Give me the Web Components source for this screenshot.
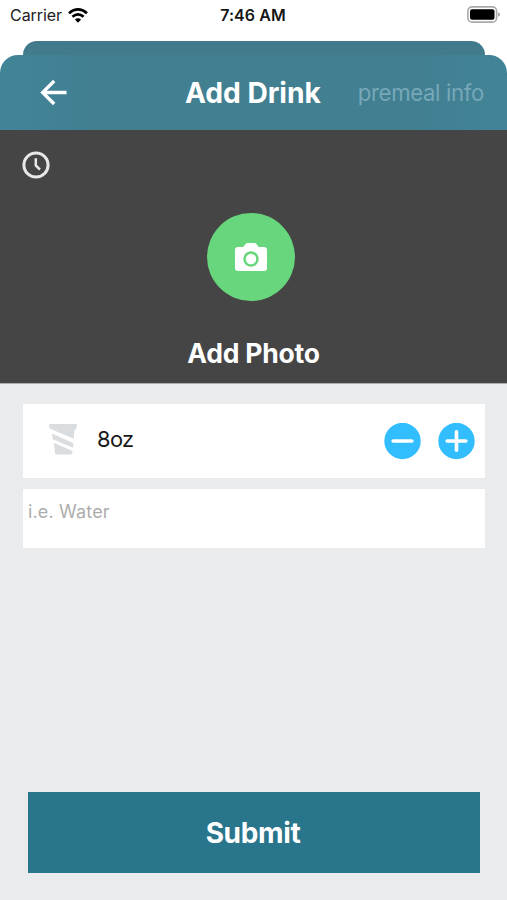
<!DOCTYPE html>
<html lang="en">
<head>
<meta charset="utf-8">
<title>Add Drink</title>
<style>
html,body{margin:0;height:100%;background:#fff}
body{font-family:Inter,"Liberation Sans",sans-serif;overflow:hidden}
</style>
</head>
<body>
<drink-screen></drink-screen>
<script>
const define = (name, markup) => customElements.define(name, class extends HTMLElement {
  constructor() {
    super();
    this.attachShadow({ mode: 'open' }).innerHTML = markup;
  }
});

define('status-bar', `
<style>
:host{display:grid;grid-template-columns:1fr auto 1fr;align-items:center;height:30px;padding:0 8px 0 7px;font-size:16px;line-height:30px;color:#222;box-sizing:border-box}
.left{display:flex;align-items:center;gap:6px;padding-left:3px}
.carrier{letter-spacing:-.05px}
.time{font-weight:600;letter-spacing:.08px;color:#161616}
svg{display:block}
.battery{justify-self:end;margin:-2px -1px 0 0}
</style>
<div class="left"><span class="carrier">Carrier</span>
<svg width="20" height="15" viewBox="0 0 20 15" fill="none" stroke="#000" stroke-width="2.7"><path d="M1 5.2Q10-2.3 19 5.2M4.4 8.8Q10 4 15.6 8.8"/><path d="M6.9 11.5Q10 9 13.1 11.5L10 14.7Z" fill="#000" stroke="none"/></svg></div>
<span class="time">7:46 AM</span>
<svg class="battery" width="33" height="17" viewBox="0 0 33 17"><rect x=".9" y=".9" width="28.7" height="15.2" rx="4.2" fill="#fff" stroke="#aaa" stroke-width="1.6"/><rect x="3" y="3.2" width="24.5" height="10.6" rx="2" fill="#000"/><path d="M31.2 6.2Q33 7 33 8.5T31.2 10.8Z" fill="#999"/></svg>
`);

define('nav-header', `
<style>
:host{display:grid;grid-template-rows:14px 75px;margin-top:11px}
.back-card{grid-row:1/3;grid-column:1;margin:0 22px 0 23px;border-radius:14px 14px 0 0;background:linear-gradient(#41798a,#418092 35px)}
.bar{grid-row:2;grid-column:1;display:grid;grid-template-columns:145px 1fr auto;align-items:center;border-radius:18px 18px 0 0;padding:0 23px 0 40px;background:linear-gradient(90deg,#428598,#417f91 18%,#417f91 82%,#428497)}
h1{margin:0;font-size:28.2px;line-height:34px;font-weight:700;letter-spacing:-.05px;color:#fff;white-space:nowrap}
.info{font-size:22.2px;line-height:34px;letter-spacing:-.35px;color:#76a8b8;white-space:nowrap}
svg{display:block}
</style>
<div class="back-card"></div>
<div class="bar">
<svg width="27" height="27" viewBox="0 0 27 27" fill="none" stroke="#fff" stroke-width="3.3"><path d="M26.5 13.5H3M14.2 2L2.6 13.5 14.2 25"/></svg>
<h1><slot></slot></h1><span class="info"><slot name="info"></slot></span>
</div>
`);

define('photo-panel', `
<style>
:host{display:flex;flex-direction:column;align-items:center;height:254px;background:#454545;border-bottom:1px solid #aaaeaf;box-sizing:border-box}
.clock{align-self:flex-start;margin:21px 0 0 22px}
.circle{display:grid;place-items:center;width:88px;height:88px;margin:34px 5px 0 0;border-radius:50%;background:#68d67c}
.label{margin-top:35px;font-size:26.5px;line-height:34px;font-weight:700;letter-spacing:-.2px;color:#fff}
svg{display:block}
</style>
<svg class="clock" width="28" height="28" viewBox="0 0 28 28" fill="none" stroke="#e8e8e8"><circle cx="14" cy="14" r="12.1" stroke-width="3"/><path d="M13.8 7.2V14.4L18 18.6" stroke-width="2.5"/></svg>
<div class="circle"><svg width="32" height="28" viewBox="0 0 32 28"><path d="M3 4H8.2L10.6 1Q11.2 0 12.4 0H19.6Q20.8 0 21.4 1L23.8 4H29Q32 4 32 7V25.3Q32 28 29 28H3Q0 28 0 25.3V7Q0 4 3 4Z" fill="#fff"/><circle cx="16" cy="16" r="6.5" fill="#fff" stroke="#68d67c" stroke-width="2.5"/></svg></div>
<div class="label"><slot></slot></div>
`);

define('round-button', `
<style>
:host{display:block;width:37px;height:37px}
svg{display:block}
.v{display:none}
:host([kind="plus"]) .v{display:block}
</style>
<svg width="37" height="37" viewBox="0 0 37 37" fill="none" stroke="#fff" stroke-width="3.6" stroke-linecap="round"><circle cx="18.5" cy="18" r="18.2" fill="#32bdfe" stroke="none"/><path d="M9.2 18H27.8"/><path class="v" d="M18.5 8.7V27.3"/></svg>
`);

define('amount-row', `
<style>
:host{display:flex;align-items:center;height:74px;padding:0 10px 0 26px;background:#fff;box-sizing:border-box}
.cup{display:block;margin-top:-4px}
.amount{flex:1;margin:-4px 0 0 20px;font-size:21.8px;line-height:30px;letter-spacing:-.6px;color:#191919}
.buttons{display:flex;gap:17px}
</style>
<svg class="cup" width="28" height="31" viewBox="0 0 28 31" fill="#dadddf"><path d="M0 0H28L27.5 4.5 25.6 6 24.8 14.8 2.3 5.3 .5 4.5Z"/><path d="M3 9.6L24.4 19.2 24 23.8 3.7 15.3Z"/><path d="M4.7 18.8L23.7 26.9 22.7 30.5H6.3Z"/></svg>
<span class="amount"><slot></slot></span>
<div class="buttons"><round-button></round-button><round-button kind="plus"></round-button></div>
`);

define('note-field', `
<style>
:host{display:block;height:59px;padding:7px 5px;background:#fff;color:#adadad;font-size:18px;line-height:32px;letter-spacing:.15px;box-sizing:border-box}
</style><slot></slot>
`);

define('submit-button', `
<style>
:host{display:grid;place-items:center;height:81px;padding:1px 2px 0 0;background:#29758b;color:#fff;font-size:28px;line-height:36px;font-weight:700;letter-spacing:-.35px;box-sizing:border-box}
</style><span><slot></slot></span>
`);

define('drink-screen', `
<style>
:host{display:flex;flex-direction:column;width:507px;height:900px}
main{flex:1;display:flex;flex-direction:column;background:#eaebed;padding:20px 22px 27px 23px}
note-field{margin-top:11px}
submit-button{margin:auto 5px 0}
</style>
<status-bar></status-bar>
<nav-header>Add Drink<span slot="info">premeal info</span></nav-header>
<photo-panel>Add Photo</photo-panel>
<main>
<amount-row>8oz</amount-row>
<note-field>i.e. Water</note-field>
<submit-button>Submit</submit-button>
</main>
`);
</script>
</body>
</html>
